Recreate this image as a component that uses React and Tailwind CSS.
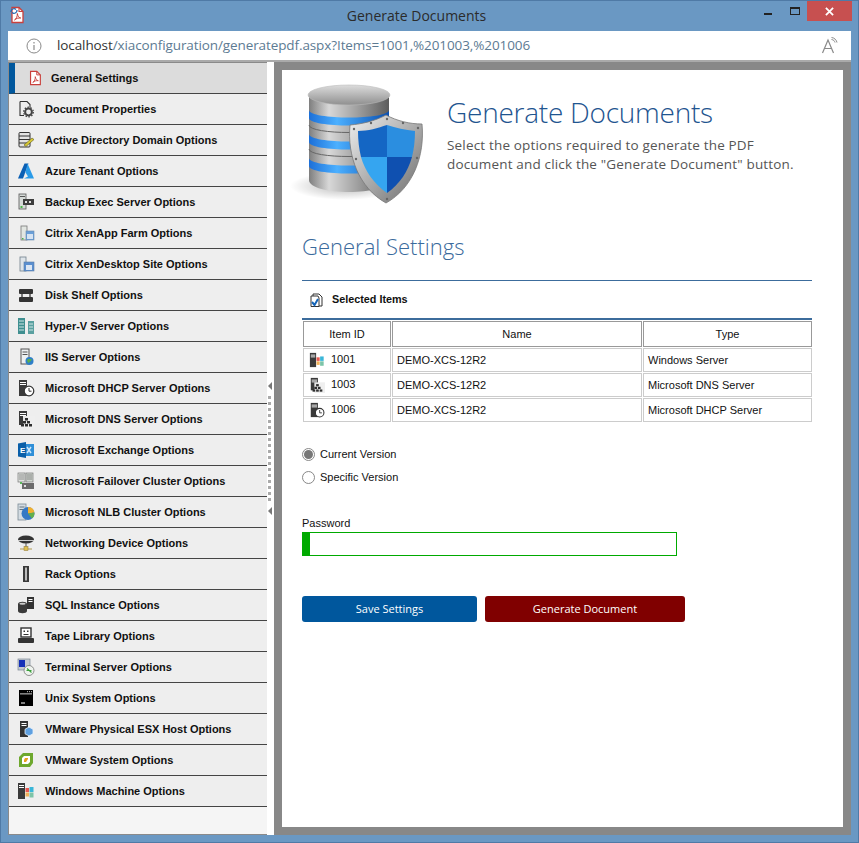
import React from 'react';

const Svg = ({ children, className = 'w-[18px] h-[18px]' }) => (
  <svg viewBox="0 0 18 18" className={className}>{children}</svg>
);

const PdfIcon = ({ className }) => (
  <Svg className={className}>
    <path d="M4 1.500h7l4 4v11H4z" fill="#fff" stroke="#c9403c" strokeWidth="1.300" />
    <path d="M11 1.500v4h4" fill="none" stroke="#c9403c" strokeWidth="1.100" />
    <path d="M6.500 14c2-1 3-4 2.800-6.500.6 3 1.600 4 3.400 4.500-2.200-.2-4.500.3-6.200 2z" fill="none" stroke="#c9403c" strokeWidth="1" />
  </Svg>
);

const Tower = ({ x = 2, w = 6, y = 1, h = 15, fill = '#3a3a3a' }) => (
  <g>
    <rect x={x} y={y} width={w} height={h} fill={fill} />
    <rect x={x + 1} y={y + 2} width={w - 2} height="1" fill="#fff" />
    <rect x={x + 1} y={y + 4} width={w - 2} height="1" fill="#fff" />
  </g>
);

const WinFlag = () => (
  <g>
    <rect x="8.500" y="6" width="3.500" height="4" fill="#e8574f" />
    <rect x="12.500" y="5" width="4" height="5" fill="#3ab6d8" />
    <rect x="8.500" y="10.500" width="3.500" height="4" fill="#f2b25a" />
    <rect x="12.500" y="10.500" width="4" height="5" fill="#7cc4a8" />
  </g>
);

const Clock = () => (
  <g>
    <circle cx="12" cy="12" r="4.800" fill="#fff" stroke="#333" strokeWidth="1.200" />
    <path d="M12 9v3.200h2.500" fill="none" stroke="#333" strokeWidth="1" />
  </g>
);

const Bricks = () => (
  <g fill="#2e2e2e">
    <rect x="8" y="8" width="3" height="2.500" />
    <rect x="6" y="11" width="3" height="2.500" />
    <rect x="10" y="11" width="3" height="2.500" />
    <rect x="4" y="14" width="3" height="2.500" />
    <rect x="8" y="14" width="3" height="2.500" />
    <rect x="12" y="14" width="3" height="2.500" />
  </g>
);

const Docs = ({ c = '#4a7fc0' }) => (
  <g>
    <rect x="3" y="2" width="6" height="14" fill="#dfe5ea" stroke="#6f7f8c" strokeWidth=".8" />
    <rect x="7" y="7" width="10" height="9" fill={c} stroke="#5b7da6" strokeWidth=".6" />
    <rect x="9" y="10" width="6" height="5" fill="#dbe6f3" />
  </g>
);

const Icons = {
  doc: () => (
    <Svg>
      <path d="M3 1.500h7l3 3v3M3 1.500v14h4" fill="none" stroke="#333" strokeWidth="1.100" />
      <circle cx="11.500" cy="12" r="3.400" fill="none" stroke="#444" strokeWidth="2" />
      <circle cx="11.500" cy="12" r="4.800" fill="none" stroke="#444" strokeWidth="1.300" strokeDasharray="1.500 1.500" />
    </Svg>
  ),
  ad: () => (
    <Svg>
      <rect x="2" y="1.500" width="11" height="14.500" rx="1" fill="#e3e3e3" stroke="#333" strokeWidth="1" />
      <path d="M2 5h11M2 8.500h11M2 12h11" stroke="#333" strokeWidth="1" />
      <path d="M7 14l8-7 2 1.500-8 7z" fill="#d8c936" stroke="#5c5a20" strokeWidth=".6" />
    </Svg>
  ),
  azure: () => (
    <Svg>
      <path d="M7.500 1.500h4L6 16.500H1z" fill="#0a5fb4" />
      <path d="M10.500 1.500L17 16.500H7l4-2-2.500-4z" fill="#2a9be8" />
    </Svg>
  ),
  backup: () => (
    <Svg>
      <rect x="2" y="1" width="7" height="15" fill="#d6dbd8" stroke="#555" strokeWidth=".8" />
      <rect x="3" y="3" width="5" height="1" fill="#555" />
      <rect x="3.500" y="13" width="2" height="2" fill="#48b848" />
      <rect x="6" y="6" width="11" height="6" fill="#3d3d3d" />
      <rect x="8" y="8" width="2" height="2" fill="#ddd" />
      <rect x="12" y="8" width="2" height="2" fill="#ddd" />
    </Svg>
  ),
  xenapp: () => (
    <Svg>
      <rect x="4" y="2" width="6" height="14" fill="#e2e6e2" stroke="#777" strokeWidth=".8" />
      <rect x="5" y="14" width="1.500" height="1.500" fill="#4ab04a" />
      <rect x="9" y="7" width="8" height="9" fill="#6a9fd8" stroke="#6b8cb0" strokeWidth=".6" />
      <rect x="10" y="10" width="6" height="5" fill="#d6e3f2" />
    </Svg>
  ),
  xendesk: () => (
    <Svg>
      <Docs c="#5a8fd0" />
    </Svg>
  ),
  disk: () => (
    <Svg>
      <rect x="2" y="3" width="14" height="5" rx="1" fill="#333" />
      <rect x="2" y="11" width="14" height="5" rx="1" fill="#333" />
      <rect x="4" y="8" width="2" height="3" fill="#777" />
      <rect x="12" y="8" width="2" height="3" fill="#777" />
    </Svg>
  ),
  hyperv: () => (
    <Svg>
      <rect x="1" y="1" width="7" height="16" fill="#3f8f90" />
      <rect x="11" y="4" width="6" height="13" fill="#5aa0a0" />
      <path d="M2 4h5M2 7h5M2 10h5M2 13h5M12 7h4M12 10h4M12 13h4" stroke="#cfe6e6" strokeWidth="1" />
    </Svg>
  ),
  iis: () => (
    <Svg>
      <rect x="4" y="1" width="8" height="15" fill="#eef0f2" stroke="#555" strokeWidth="1" />
      <path d="M5.500 4h5M5.500 6.500h5" stroke="#555" strokeWidth="1" />
      <circle cx="12.500" cy="13" r="4" fill="#2f7fc8" />
      <path d="M10 12c2-2 3 0 5-1-1 3-3 3-4 4z" fill="#5bb04c" />
    </Svg>
  ),
  dhcp: () => (
    <Svg>
      <Tower x={2} w={8} y={1} h={16} />
      <Clock />
    </Svg>
  ),
  dns: () => (
    <Svg>
      <Tower x={2} w={8} y={1} h={14} />
      <rect x="6" y="6" width="12" height="12" fill="#eee" opacity=".95" />
      <Bricks />
    </Svg>
  ),
  exchange: () => (
    <Svg>
      <rect x="7" y="3" width="10" height="12" fill="#2f8fd8" />
      <path d="M10 6l4 6M14 6l-4 6" stroke="#cfe8fa" strokeWidth="1.500" />
      <path d="M1 2.500l8-1.500v16l-8-1.500z" fill="#0a5fa8" />
      <text x="3" y="12" fontSize="8" fontWeight="700" fill="#fff" fontFamily="Liberation Sans, sans-serif">E</text>
    </Svg>
  ),
  failover: () => (
    <Svg>
      <rect x="1" y="1" width="7" height="9" fill="#dfe3df" stroke="#777" strokeWidth=".7" />
      <rect x="9" y="1" width="7" height="9" fill="#cfd6cf" stroke="#777" strokeWidth=".7" />
      <path d="M2 3h5M2 5h5M2 7h5M10 3h5M10 5h5M10 7h5" stroke="#777" strokeWidth=".8" />
      <rect x="5" y="11" width="12" height="6" fill="#6b6b6b" />
      <rect x="7" y="13" width="2" height="2" fill="#ddd" />
      <rect x="3" y="10" width="2" height="2" fill="#5cb85c" />
    </Svg>
  ),
  nlb: () => (
    <Svg>
      <rect x="1" y="1" width="8" height="16" fill="#d4dce2" stroke="#7a8a96" strokeWidth=".8" />
      <path d="M2.500 4h5M2.500 6.500h5" stroke="#66757f" strokeWidth="1" />
      <circle cx="11" cy="10.500" r="6.500" fill="#3478c4" />
      <path d="M11 10.500V4a6.500 6.500 0 0 1 6.400 5.500z" fill="#f0b030" />
      <path d="M11 10.500l6.400-1a6.500 6.500 0 0 1-2.500 6z" fill="#63b04a" />
    </Svg>
  ),
  network: () => (
    <Svg>
      <ellipse cx="9" cy="5.500" rx="8" ry="4" fill="#333" />
      <path d="M1 6.500h16" stroke="#ccc" strokeWidth="1" />
      <path d="M9 9v4" stroke="#555" strokeWidth="1" />
      <path d="M3 15h12" stroke="#b09a50" strokeWidth="1" />
      <rect x="7" y="12.500" width="4" height="4" fill="#e0c050" stroke="#8c7430" strokeWidth=".5" />
    </Svg>
  ),
  rack: () => (
    <Svg>
      <rect x="6" y="1" width="6" height="16" fill="#3a3a3a" />
      <rect x="8" y="2.500" width="2" height="13" fill="#bbb" />
    </Svg>
  ),
  sql: () => (
    <Svg>
      <rect x="10" y="1" width="7" height="12" fill="#333" />
      <path d="M11.500 3.500h4M11.500 5.500h4" stroke="#fff" strokeWidth="1" />
      <path d="M1 8c0-3 9-3 9 0v7c0 3-9 3-9 0z" fill="#3a3a3a" />
      <ellipse cx="5.500" cy="7.800" rx="3.200" ry="1" fill="#ccc" />
    </Svg>
  ),
  tape: () => (
    <Svg>
      <rect x="4" y="1" width="10" height="9" fill="#fff" stroke="#333" strokeWidth="1.400" />
      <rect x="6.500" y="3.500" width="1.500" height="1.500" fill="#333" />
      <rect x="10" y="3.500" width="1.500" height="1.500" fill="#333" />
      <path d="M6.500 7.500h5" stroke="#333" strokeWidth="1" />
      <rect x="1" y="11" width="16" height="5" rx="1" fill="#333" />
    </Svg>
  ),
  terminal: () => (
    <Svg>
      <rect x="1" y="1" width="12" height="11" fill="#c3c9d2" stroke="#7a8694" strokeWidth=".7" />
      <rect x="2" y="2" width="6" height="7" fill="#1430b8" />
      <circle cx="12" cy="12.500" r="5" fill="#eef3ee" stroke="#777" strokeWidth=".8" />
      <path d="M9.500 12.500h5M10 10.500l4.500 4" stroke="#3aa03a" strokeWidth="1.100" />
    </Svg>
  ),
  unix: () => (
    <Svg>
      <rect x="2" y="1" width="14" height="16" fill="#000" />
      <rect x="3" y="4.500" width="12" height=".8" fill="#fff" />
      <path d="M10 2.700h1M12 2.700h1M14 2.700h1" stroke="#fff" strokeWidth=".8" />
      <rect x="4" y="13.500" width="4" height="1" fill="#fff" />
    </Svg>
  ),
  esx: () => (
    <Svg>
      <rect x="3" y="1" width="8" height="16" fill="#333" />
      <path d="M4.500 3.500h5M4.500 5.500h5" stroke="#fff" strokeWidth="1" />
      <path d="M12 7l4 2.300v4.500L12 16l-4-2.200V9.300z" fill="#5fa0e0" stroke="#e8f2fb" strokeWidth=".8" />
    </Svg>
  ),
  vmware: () => (
    <Svg>
      <path d="M6 2h10v10l-3 4H2V6z" fill="#6ea82e" />
      <path d="M7 5h6v6l-2 2H5V7z" fill="#fff" />
      <path d="M8 7h3v1l-2 3H7V9z" fill="#e8a020" />
    </Svg>
  ),
  windows: () => (
    <Svg>
      <Tower x={1} w={7} y={1} h={16} />
      <WinFlag />
    </Svg>
  ),
};

const menuItems = [
  ['Document Properties', 'doc'],
  ['Active Directory Domain Options', 'ad'],
  ['Azure Tenant Options', 'azure'],
  ['Backup Exec Server Options', 'backup'],
  ['Citrix XenApp Farm Options', 'xenapp'],
  ['Citrix XenDesktop Site Options', 'xendesk'],
  ['Disk Shelf Options', 'disk'],
  ['Hyper-V Server Options', 'hyperv'],
  ['IIS Server Options', 'iis'],
  ['Microsoft DHCP Server Options', 'dhcp'],
  ['Microsoft DNS Server Options', 'dns'],
  ['Microsoft Exchange Options', 'exchange'],
  ['Microsoft Failover Cluster Options', 'failover'],
  ['Microsoft NLB Cluster Options', 'nlb'],
  ['Networking Device Options', 'network'],
  ['Rack Options', 'rack'],
  ['SQL Instance Options', 'sql'],
  ['Tape Library Options', 'tape'],
  ['Terminal Server Options', 'terminal'],
  ['Unix System Options', 'unix'],
  ['VMware Physical ESX Host Options', 'esx'],
  ['VMware System Options', 'vmware'],
  ['Windows Machine Options', 'windows'],
];

const rows = [
  ['1001', 'DEMO-XCS-12R2', 'Windows Server', 'windows'],
  ['1003', 'DEMO-XCS-12R2', 'Microsoft DNS Server', 'dns'],
  ['1006', 'DEMO-XCS-12R2', 'Microsoft DHCP Server', 'dhcp'],
];

function DatabaseShield() {
  return (
    <svg viewBox="0 0 140 125" className="w-[140px] h-[125px]">
      <defs>
        <linearGradient id="metal" x1="0" x2="1" y1="0" y2="0">
          <stop offset="0" stopColor="#7e7e7e" />
          <stop offset=".25" stopColor="#d8d8d8" />
          <stop offset=".6" stopColor="#a0a0a0" />
          <stop offset="1" stopColor="#5c5c5c" />
        </linearGradient>
        <linearGradient id="top" x1="0" x2="0" y1="0" y2="1">
          <stop offset="0" stopColor="#dcdcdc" />
          <stop offset="1" stopColor="#8f8f8f" />
        </linearGradient>
        <linearGradient id="glow" x1="0" x2="1" y1="0" y2="0">
          <stop offset="0" stopColor="#1c6fd8" />
          <stop offset=".35" stopColor="#4cb0ff" />
          <stop offset="1" stopColor="#0b4fb0" />
        </linearGradient>
        <linearGradient id="rim" x1="0" x2="1" y1="0" y2="1">
          <stop offset="0" stopColor="#f0f0f0" />
          <stop offset=".6" stopColor="#a0a0a0" />
          <stop offset="1" stopColor="#6a6a6a" />
        </linearGradient>
        <radialGradient id="shade">
          <stop offset="0" stopColor="#000" stopOpacity=".28" />
          <stop offset="1" stopColor="#000" stopOpacity="0" />
        </radialGradient>
      </defs>
      <ellipse cx="55" cy="104" rx="55" ry="14" fill="url(#shade)" />
      <path d="M19 13h80v85c0 16-80 16-80 0z" fill="url(#metal)" />
      <path d="M19 28c0 10 80 10 80 0v8c0 10-80 10-80 0z" fill="url(#glow)" />
      <path d="M19 52c0 10 80 10 80 0v8c0 10-80 10-80 0z" fill="url(#glow)" />
      <path d="M19 76c0 10 80 10 80 0v8c0 10-80 10-80 0z" fill="url(#glow)" />
      <path d="M19 43c0 10 80 10 80 0" fill="none" stroke="#666" strokeWidth="1" />
      <path d="M19 67c0 10 80 10 80 0" fill="none" stroke="#666" strokeWidth="1" />
      <ellipse cx="59" cy="13" rx="41" ry="10" fill="url(#top)" stroke="#bbb" strokeWidth=".6" />
      <path d="M96 33c11 6 24 9 36 9 3 32-9 64-36 79C69 106 57 74 60 43c12-1 25-4 36-10z" fill="url(#rim)" stroke="#777" strokeWidth=".8" />
      <path d="M97 43c-9 3-19 6-29 6 0 9 1 18 3 26h26z" fill="#1466c4" />
      <path d="M97 43c9 3 18 5 28 6 0 9-1 18-3 26H97z" fill="#2b8ee0" />
      <path d="M71 75c4 14 13 27 26 36V75z" fill="#35a5f0" />
      <path d="M122 75c-4 14-12 27-25 36V75z" fill="#0f50b0" />
      <g fill="#666">
        <circle cx="64" cy="47" r="1.200" />
        <circle cx="81" cy="41" r="1.200" />
        <circle cx="97" cy="37" r="1.200" />
        <circle cx="113" cy="41" r="1.200" />
        <circle cx="128" cy="46" r="1.200" />
        <circle cx="66" cy="77" r="1.200" />
        <circle cx="127" cy="76" r="1.200" />
        <circle cx="97" cy="117" r="1.200" />
      </g>
    </svg>
  );
}

function App() {
  return (
    <div className="w-[859px] h-[843px] flex flex-col overflow-hidden bg-[#6a98c3] border border-[#4f7aa6] font-['Liberation_Sans',sans-serif]">
      <div className="h-[30px] flex shrink-0">
        <div className="w-[30px] pl-[7px] pt-[5px] relative">
          <PdfIcon className="w-[18px] h-[18px]" />
          <svg viewBox="0 0 8 8" className="absolute left-[9px] top-[6px] w-[8px] h-[8px]">
            <path d="M1 5a3 3 0 0 1 5-2.500M7 3a3 3 0 0 1-5 2.500" fill="none" stroke="#2468b0" strokeWidth="1.300" />
          </svg>
        </div>
        <div className="flex-1 text-center pt-[5px] pl-[38px] text-[14px] leading-[20px] text-[#2b2b2b] font-['Open_Sans',sans-serif]">
          Generate Documents
        </div>
        <div className="flex items-start shrink-0 mr-[6px]">
          <div className="w-[8px] h-[2px] mt-[12px] bg-[#222]" />
          <div className="w-[10px] h-[8px] mt-[6px] ml-[18px] border border-t-2 border-[#222]" />
          <div className="w-[45px] h-[20px] ml-[7px] bg-[#c75050] flex items-center justify-center">
            <svg viewBox="0 0 10 10" className="w-[9px] h-[9px]">
              <path d="M1 1l8 8M9 1l-8 8" stroke="#fff" strokeWidth="2" />
            </svg>
          </div>
        </div>
      </div>

      <div className="h-[31px] mx-[7px] shrink-0 bg-white border-b-2 border-[#aaaaaa] flex items-center font-['Open_Sans',sans-serif]">
        <svg viewBox="0 0 16 16" className="w-[16px] h-[16px] ml-[18px]">
          <circle cx="8" cy="8" r="7" fill="none" stroke="#8a8a8a" strokeWidth="1" />
          <path d="M8 4v1.500M8 7v5" stroke="#8a8a8a" strokeWidth="1.200" />
        </svg>
        <span className="ml-[15px] text-[13.500px] tracking-[-0.1px] text-[#333]">
          localhost<span className="text-[#5d7b93]">/xiaconfiguration/generatepdf.aspx?Items=1001,%201003,%201006</span>
        </span>
        <svg viewBox="0 0 18 18" className="w-[18px] h-[18px] ml-auto mr-[12px]">
          <path d="M1.500 16L7 3l5.500 13M3.500 11.500h7" fill="none" stroke="#8a8a8a" strokeWidth="1.200" />
          <path d="M10.500 2.500c2 .3 3 1.300 3.500 3M10.500.5c3 .3 5 2.500 5.500 5" fill="none" stroke="#8a8a8a" strokeWidth="1" />
        </svg>
      </div>

      <div className="flex-1 min-h-0 mx-[7px] mb-[7px] flex">
        <div className="w-[259px] shrink-0 bg-[#f5f5f5] border-l border-b border-t border-[#8a8a8a]">
          <div className="h-[31px] flex items-center bg-[#dcdcdc] border-b border-[#444] border-l-[6px] border-l-[#00579d]">
            <PdfIcon className="ml-[12px] w-[16px] h-[16px]" />
            <span className="ml-[8px] text-[11px] font-bold text-[#111]">General Settings</span>
          </div>
          {menuItems.map(([label, icon]) => {
            const Icon = Icons[icon];
            return (
              <div key={label} className="h-[31px] flex items-center bg-[#eeeeee] border-b border-[#444]">
                <div className="w-[36px] flex justify-end pr-[10px] shrink-0">
                  <Icon />
                </div>
                <span className="text-[11px] font-bold text-[#111] whitespace-nowrap">{label}</span>
              </div>
            );
          })}
        </div>

        <div className="w-[7px] shrink-0 bg-white flex flex-col items-center justify-center gap-[3px] pr-[2px]">
          <div className="w-0 h-0 mb-[3px] border-y-[4px] border-y-transparent border-r-[4px] border-r-[#777]" />
          {Array.from({ length: 18 }).map((_, i) => (
            <div key={i} className="w-[3px] h-[3px] bg-[#aaaaaa]" />
          ))}
          <div className="w-0 h-0 mt-[3px] border-y-[4px] border-y-transparent border-r-[4px] border-r-[#777]" />
        </div>

        <div className="flex-1 min-w-0 bg-[#888888] p-[8px]">
          <div className="h-full bg-white">
            <div className="flex pl-[8px] pt-[12px]">
              <div className="w-[157px] shrink-0">
                <DatabaseShield />
              </div>
              <div className="pt-[13px] font-['Open_Sans',sans-serif]">
                <h1 className="text-[28px] leading-[34px] font-light tracking-[-0.25px] text-[#1f5590]">Generate Documents</h1>
                <p className="mt-[7px] text-[13.500px] leading-[19px] text-[#555] tracking-[0.17px]">
                  Select the options required to generate the PDF<br />
                  document and click the "Generate Document" button.
                </p>
              </div>
            </div>

            <div className="pl-[20px] pr-[31px]">
              <h2 className="mt-[24px] text-[22px] leading-[30px] font-light text-[#3a6a9c] font-['Open_Sans',sans-serif]">General Settings</h2>

              <div className="mt-[19px] h-[40px] border-t border-b-2 border-t-[#3c6c9c] border-b-[#3c6c9c] flex items-center pl-[6px]">
                <svg viewBox="0 0 16 16" className="w-[16px] h-[16px]">
                  <path d="M5 2h6l3 3v9h-3M5 2v2M3 4h7l1 2v8.500H3z" fill="none" stroke="#333" strokeWidth="1" />
                  <path d="M4 10l2.500 3L10 7" fill="none" stroke="#1565b8" strokeWidth="2" />
                </svg>
                <span className="ml-[8px] text-[10.800px] font-bold text-[#111]">Selected Items</span>
              </div>

              <table className="w-[511px] table-fixed border-separate border-spacing-[1px] text-[11px] text-[#111]">
                <thead>
                  <tr>
                    <th className="w-[88px] h-[26px] font-normal border border-[#999]">Item ID</th>
                    <th className="w-[250px] font-normal border border-[#999]">Name</th>
                    <th className="font-normal border border-[#999]">Type</th>
                  </tr>
                </thead>
                <tbody>
                  {rows.map(([id, name, type, icon]) => {
                    const Icon = Icons[icon];
                    return (
                      <tr key={id}>
                        <td className="h-[24px] border border-[#cccccc]">
                          <div className="flex items-center pl-[5px] gap-[6px] [&_svg]:w-[16px] [&_svg]:h-[16px]">
                            <Icon />
                            <span className="mb-[1px]">{id}</span>
                          </div>
                        </td>
                        <td className="pl-[4px] border border-[#cccccc]">{name}</td>
                        <td className="pl-[4px] border border-[#cccccc]">{type}</td>
                      </tr>
                    );
                  })}
                </tbody>
              </table>

              <div className="mt-[24px] flex items-center h-[14px] text-[11px] text-[#111]">
                <span className="w-[13px] h-[13px] rounded-full border border-[#888] flex items-center justify-center">
                  <span className="w-[9px] h-[9px] rounded-full bg-[#777]" />
                </span>
                <span className="ml-[5px]">Current Version</span>
              </div>
              <div className="mt-[9px] flex items-center h-[14px] text-[11px] text-[#111]">
                <span className="w-[13px] h-[13px] rounded-full border border-[#888]" />
                <span className="ml-[5px]">Specific Version</span>
              </div>

              <div className="mt-[33px] text-[11px] leading-[12px] text-[#111]">Password</div>
              <div className="mt-[3px] w-[375px] h-[24px] border border-[#00aa00] bg-white">
                <div className="w-[7px] h-full bg-[#00aa00]" />
              </div>

              <div className="mt-[40px] flex gap-[8px] font-['Open_Sans',sans-serif] text-[11px] text-white">
                <button className="w-[175px] h-[26px] rounded-[3px] bg-[#00579d]">Save Settings</button>
                <button className="w-[200px] h-[26px] rounded-[3px] bg-[#800000]">Generate Document</button>
              </div>
            </div>
          </div>
        </div>
      </div>
    </div>
  );
}

export default App;
